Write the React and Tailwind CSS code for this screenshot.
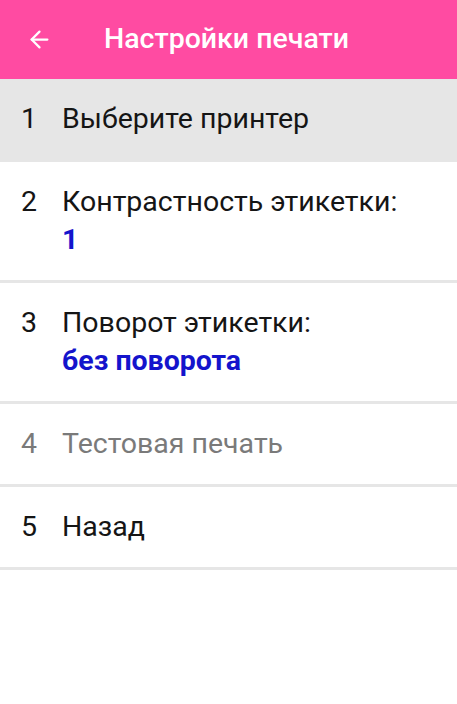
import { ArrowLeft } from 'lucide-react';

const items = [
  { n: 1, label: 'Выберите принтер', active: true },
  { n: 2, label: 'Контрастность этикетки:', value: '1' },
  { n: 3, label: 'Поворот этикетки:', value: 'без поворота' },
  { n: 4, label: 'Тестовая печать', disabled: true },
  { n: 5, label: 'Назад' },
];

export default function App() {
  return (
    <div className="w-[457px] h-[704px] bg-white" style={{ fontFamily: 'Roboto, sans-serif' }}>
      {/* Toolbar */}
      <div className="h-[79px] bg-[#ff4ba2] flex items-center text-white">
        <div className="w-[104px] pl-[26px] flex items-center">
          <ArrowLeft size={27} strokeWidth={2} />
        </div>
        <span className="text-[28.5px] font-medium">Настройки печати</span>
      </div>

      {/* Menu */}
      <div>
        {items.map(item => (
          <div
            key={item.n}
            className={`flex py-[21px] border-b-[3px] border-[#e6e6e6] text-[28.5px] leading-[38px] ${item.active ? 'bg-[#e6e6e6]' : ''} ${item.disabled ? 'text-[#7a7a7a]' : 'text-[#151515]'}`}
          >
            <span className="w-[62px] pl-[21px]">{item.n}</span>
            <div className="flex flex-col">
              <span>{item.label}</span>
              {item.value && <span className="font-bold text-[#1414cc]">{item.value}</span>}
            </div>
          </div>
        ))}
      </div>
    </div>
  );
}
